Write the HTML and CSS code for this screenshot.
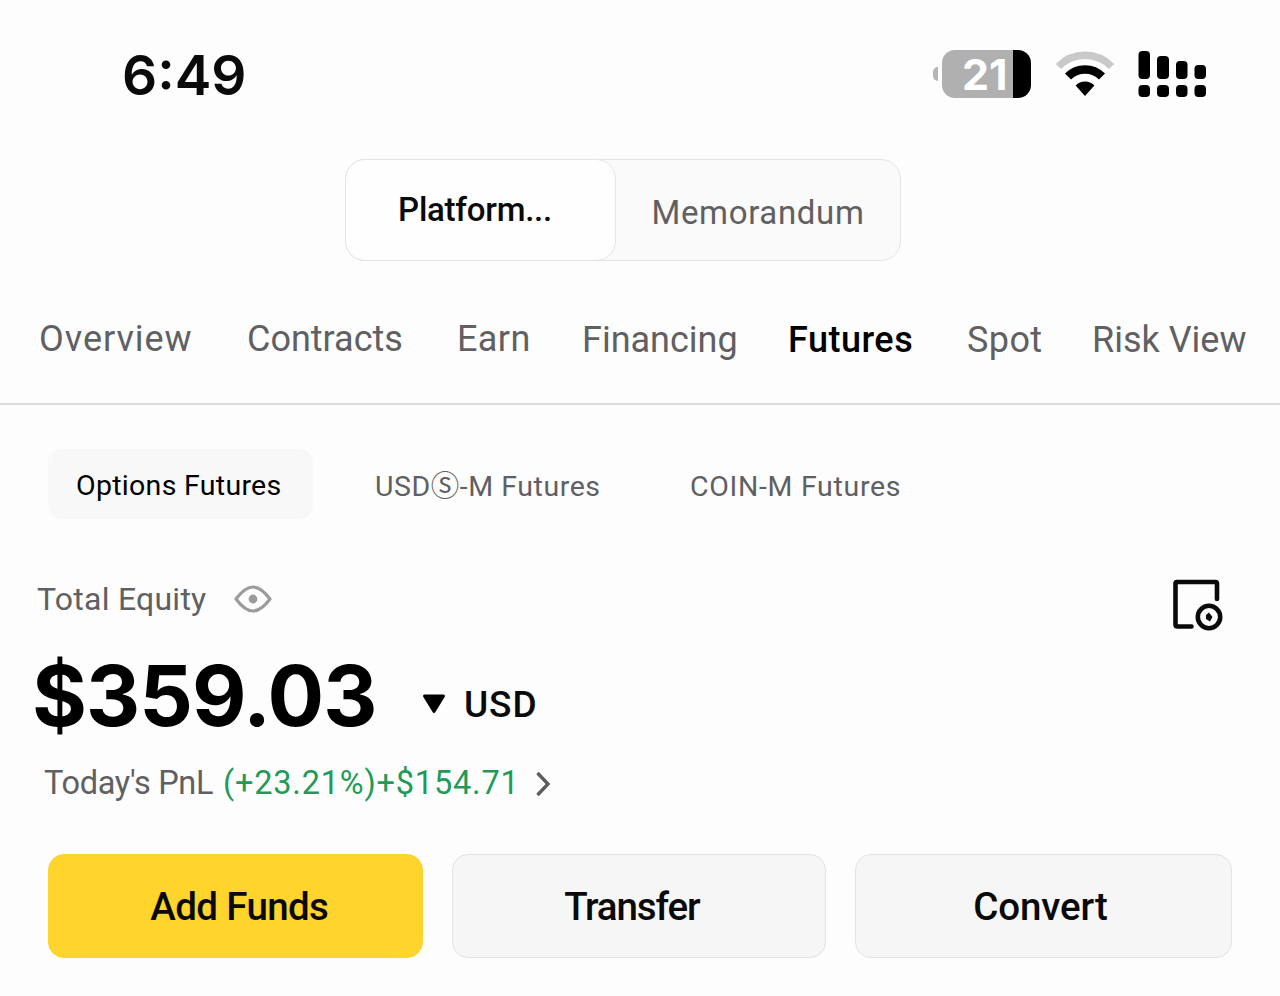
FILE: index.html
```html
<!DOCTYPE html>
<html lang="en">
<head>
  <meta charset="UTF-8" />
  <meta name="viewport" content="width=device-width, initial-scale=1.0"/>
  <title>Futures | Assets</title>
  <link rel="stylesheet" href="styles.css">
</head>

<body>
  <div class="status-bar">
    <span class="clock">6:49</span>
    <div class="status-icons">
      <div class="battery">
        <span class="battery-cap"></span>
        <span class="battery-body">21</span>
      </div>
      <svg class="wifi" width="60" height="48" viewBox="0 0 60 48">
        <path d="M3.5 16.5 A37 37 0 0 1 56.5 16.5" fill="none" stroke="#c9c9c9" stroke-width="7.5"/>
        <path d="M13 26.5 A24 24 0 0 1 47 26.5" fill="none" stroke="#000" stroke-width="8.5"/>
        <path d="M30 46 L20.6 35.5 A13 13 0 0 1 39.4 35.5 Z" fill="#000"/>
      </svg>
      <svg class="signal" width="69" height="48" viewBox="0 0 69 48">
        <rect x="0.500" y="1" width="11.500" height="28" rx="4"/>
        <rect x="19" y="6" width="12" height="23" rx="4"/>
        <rect x="38" y="11" width="11.500" height="18" rx="4"/>
        <rect x="56.500" y="15" width="11.500" height="14" rx="4"/>
        <rect x="0.500" y="35" width="11.500" height="12" rx="4"/>
        <rect x="19" y="35" width="12" height="12" rx="4"/>
        <rect x="38" y="35" width="11.500" height="12" rx="4"/>
        <rect x="56.500" y="35" width="11.500" height="12" rx="4"/>
      </svg>
    </div>
  </div>

  <div class="switcher">
    <button class="switch-btn active">Platform...</button>
    <button class="switch-btn memo">Memorandum</button>
  </div>

  <nav class="tabs">
    <a class="overview">Overview</a>
    <a class="contracts">Contracts</a>
    <a class="earn">Earn</a>
    <a class="financing">Financing</a>
    <a class="active">Futures</a>
    <a class="spot">Spot</a>
    <a class="risk">Risk View</a>
  </nav>

  <main>
    <div class="sub-tabs">
      <span class="chip active">Options Futures</span>
      <span class="chip usds">USD<span class="circled">Ⓢ</span>-M Futures</span>
      <span class="chip coin">COIN-M Futures</span>
    </div>

    <section class="equity">
      <div class="equity-head">
        <span class="equity-label">Total Equity</span>
        <svg class="eye" width="40" height="28" viewBox="0 0 40 28" fill="none">
          <path d="M3 14 Q12 2 20 2 Q28 2 37 14 Q28 26 20 26 Q12 26 3 14 Z" stroke="#9b9b9b" stroke-width="3.2" stroke-linejoin="round"/>
          <circle cx="20" cy="14" r="4.400" fill="#9b9b9b"/>
        </svg>
        <svg class="history" width="52" height="52" viewBox="0 0 52 52" fill="none" stroke="#0a0a0a">
          <path d="M46 20 V4.500 Q46 3 44.500 3 H6 Q4.500 3 4.500 4.500 V45.500 Q4.500 47.500 6.500 47.500 H20.500" stroke-width="4.600" stroke-linecap="round"/>
          <circle cx="38" cy="38" r="11.200" stroke-width="4.600"/>
          <path d="M38 33.500 L41.500 38 L39 42.500 L35 40 L35 36 Z" fill="#0a0a0a" stroke="none"/>
        </svg>
      </div>
      <div class="balance">
        <span class="amount">$359.03</span>
        <svg class="caret" width="26" height="22" viewBox="0 0 26 22">
          <path d="M3.500 3 H22.500 L13 18.500 Z" fill="#000" stroke="#000" stroke-width="3" stroke-linejoin="round"/>
        </svg>
        <span class="currency">USD</span>
      </div>
      <div class="pnl">
        <span class="pnl-label">Today's PnL</span>
        <span class="pnl-value">(+23.21%)+$154.71</span>
        <svg class="chevron" width="16" height="26" viewBox="0 0 16 26">
          <path d="M2.500 2 L13 13 L2.500 24" fill="none" stroke="#5c5c5e" stroke-width="3.400"/>
        </svg>
      </div>
    </section>

    <div class="actions">
      <button class="action-btn primary">Add Funds</button>
      <button class="action-btn transfer">Transfer</button>
      <button class="action-btn convert">Convert</button>
    </div>
  </main>
</body>
</html>
```
FILE: styles.css
```css
* {
  margin: 0;
  padding: 0;
  box-sizing: border-box;
}

body {
  width: 1280px;
  height: 996px;
  background: #fdfdfd;
  color: #0a0a0a;
  font-family: Roboto, "Liberation Sans", sans-serif;
  overflow: hidden;
}

svg {
  display: block;
  flex: none;
}

button {
  font-family: inherit;
  color: inherit;
  cursor: pointer;
}

.status-bar {
  display: flex;
  justify-content: space-between;
  height: 159px;
  padding: 50px 73px 0 122px;
}

.clock {
  font-family: Inter, "Liberation Sans", sans-serif;
  font-size: 55px;
  font-weight: 600;
  line-height: 50px;
}

.status-icons {
  display: flex;
  height: 48px;
}

.battery {
  display: flex;
  align-items: center;
}

.battery-cap {
  width: 5px;
  height: 14px;
  margin-right: 4px;
  border-radius: 5px 0 0 5px;
  background: #b5b5b5;
}

.battery-body {
  width: 89px;
  height: 48px;
  padding-left: 20px;
  border-radius: 13px;
  background: linear-gradient(to right, #b0b0b0 71px, #000 71px);
  color: #fff;
  font-family: Inter, "Liberation Sans", sans-serif;
  font-size: 43px;
  font-weight: 700;
  line-height: 48px;
}

.wifi {
  margin-left: 24px;
}

.signal {
  margin-left: 23px;
}

.switcher {
  display: flex;
  width: 556px;
  height: 102px;
  margin-left: 345px;
  border: 1.500px solid #e4e4e4;
  border-radius: 20px;
  background: #fafafa;
}

.switch-btn {
  border: none;
  background: none;
  font-size: 33px;
  line-height: 40px;
}

.switch-btn.active {
  width: 271px;
  margin: -1px 0 -1px -1px;
  padding-right: 11px;
  border: 1.500px solid #e4e4e4;
  border-radius: 20px;
  background: #fefefe;
  font-weight: 500;
  letter-spacing: -0.25px;
}

.switch-btn.memo {
  flex: 1;
  padding-top: 5px;
  color: #606062;
  letter-spacing: 0.65px;
}

.tabs {
  display: grid;
  grid-template-columns: 208px 210px 125px 206px 179px 125px 1fr;
  height: 144px;
  padding: 55px 0 0 39px;
  border-bottom: 2px solid #dcdcdc;
  color: #606062;
  font-size: 36px;
  line-height: 46px;
  white-space: nowrap;
}

.tabs .overview {
  letter-spacing: 0.95px;
}

.tabs .earn,
.tabs .spot {
  letter-spacing: 0.4px;
}

.tabs .financing,
.tabs .active,
.tabs .spot,
.tabs .risk {
  padding-top: 1px;
}

.tabs .active {
  color: #000;
  font-weight: 500;
  letter-spacing: 0.5px;
}

.sub-tabs {
  display: flex;
  height: 70px;
  margin: 44px 0 0 48px;
  color: #606062;
  font-size: 28.500px;
  line-height: 76px;
  white-space: nowrap;
}

.chip.active {
  width: 265px;
  padding-left: 28px;
  border-radius: 14px;
  background: #f8f8f8;
  color: #000;
  line-height: 74px;
  letter-spacing: 0.3px;
}

.chip.usds {
  width: 315px;
  margin-left: 62px;
  letter-spacing: 0.55px;
}

.chip.coin {
  letter-spacing: 0.7px;
}

.circled {
  font-family: "Noto Sans CJK JP", sans-serif;
  line-height: 1;
}

.equity {
  padding-left: 37px;
}

.equity-head {
  display: flex;
  height: 54px;
  margin-top: 60px;
}

.equity-label {
  width: 196px;
  color: #606062;
  font-size: 32px;
  line-height: 40px;
  letter-spacing: 0.25px;
}

.eye {
  margin-top: 6px;
}

.history {
  margin-left: 898px;
}

.balance {
  display: flex;
  height: 127px;
}

.amount {
  width: 389px;
  margin-left: -5px;
  font-family: Inter, "Liberation Sans", sans-serif;
  font-size: 84px;
  font-weight: 700;
  line-height: 126px;
  letter-spacing: -1px;
  color: #000;
}

.caret {
  margin-top: 60px;
}

.currency {
  margin-left: 17px;
  font-size: 37px;
  font-weight: 500;
  line-height: 143px;
  letter-spacing: 0.9px;
}

.pnl {
  display: flex;
  height: 94px;
  padding-left: 7px;
  color: #606062;
  font-size: 32.500px;
  line-height: 47px;
}

.pnl-label {
  width: 179px;
  letter-spacing: -0.35px;
}

.pnl-value {
  width: 312px;
  color: #1f9a57;
  letter-spacing: 0.8px;
}

.chevron {
  margin-top: 11px;
}

.actions {
  display: grid;
  grid-template-columns: 374.500px 374.500px 377px;
  gap: 29px;
  padding-left: 48px;
}

.action-btn {
  height: 103.500px;
  padding-top: 2px;
  border: 1.500px solid #e3e3e3;
  border-radius: 16px;
  background: #f6f6f6;
  font-size: 38.500px;
  font-weight: 500;
}

.action-btn.primary {
  padding-left: 8px;
  border-color: #fdd42a;
  background: #fed42d;
  letter-spacing: -0.65px;
}

.action-btn.transfer {
  padding-right: 14px;
  letter-spacing: -1.15px;
}

.action-btn.convert {
  padding-right: 6px;
  letter-spacing: -0.1px;
}
```
